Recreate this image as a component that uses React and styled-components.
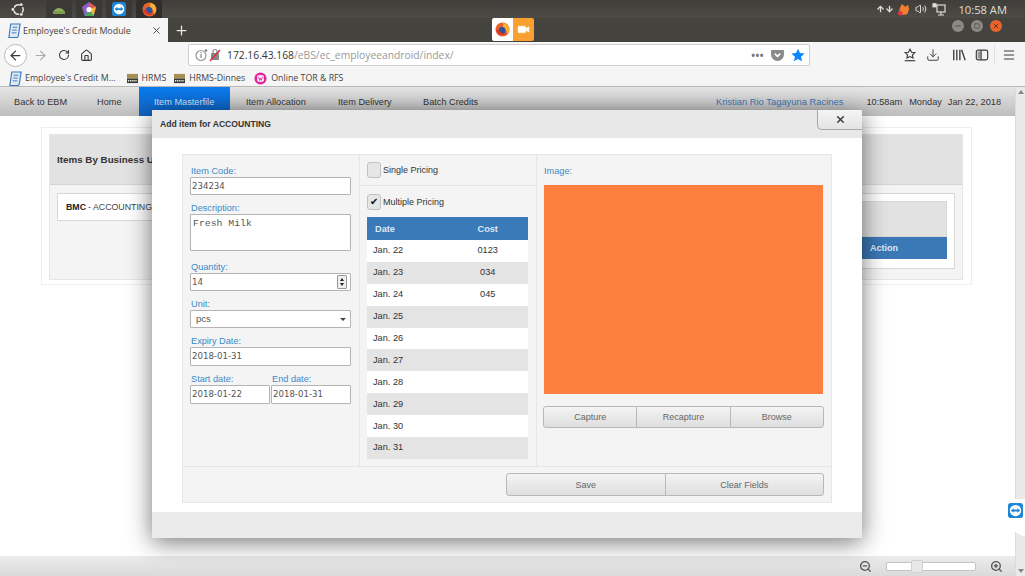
import styled, { createGlobalStyle } from "styled-components";
import {
  ArrowLeft,
  ArrowRight,
  RotateCw,
  Home as HomeIcon,
  Download,
  Menu,
  Plus,
  X,
  Video,
  Volume2,
  ArrowUp,
  ArrowDown,
  Minus,
  Square,
  ZoomIn,
  ZoomOut,
} from "lucide-react";

const GlobalStyle = createGlobalStyle`
  html, body {
    margin: 0;
    padding: 0;
    width: 1025px;
    height: 576px;
    overflow: hidden;
    background: #fff;
    font-family: "Liberation Sans", Arial, sans-serif;
  }
  * { box-sizing: border-box; }
`;

const Screen = styled.div`
  position: relative;
  width: 1025px;
  height: 576px;
  display: flex;
  flex-direction: column;
  overflow: hidden;
`;

/* ubuntu top panel */
const TopPanel = styled.div`
  height: 18px;
  flex: none;
  background: linear-gradient(#3f3e3a, #4d4b45);
  display: flex;
  align-items: center;
  padding-left: 10px;
`;

const UbuntuSlot = styled.div`
  width: 16px;
  margin-right: 20px;
  display: flex;
  align-items: center;
  justify-content: center;
`;

const Launcher = styled.div`
  width: 26px;
  height: 18px;
  margin-right: 4px;
  border-radius: 3px 3px 0 0;
  background: ${(p) => (p.$active ? "#2f2e2b" : "#3a3935")};
  display: flex;
  align-items: center;
  justify-content: center;
`;

const Tray = styled.div`
  margin-left: auto;
  display: flex;
  align-items: center;
  color: #e0dfdb;
  padding-right: 18px;
`;

const TrayIcon = styled.div`
  display: flex;
  align-items: center;
  justify-content: center;
  width: 18px;
  color: #dddcd8;
`;

const Clock = styled.span`
  margin-left: 10px;
  font-family: "Open Sans", sans-serif;
  font-size: 11.2px;
  color: #dfdedb;
`;

/* firefox chrome */
const TabBar = styled.div`
  position: relative;
  height: 24px;
  flex: none;
  background: #45433e;
  display: flex;
  align-items: stretch;
`;

const Tab = styled.div`
  width: 168px;
  background: #f5f5f5;
  display: flex;
  align-items: center;
  padding: 0 6px 0 7px;
  font-family: "Open Sans", sans-serif;
  font-size: 8.9px;
  color: #444;
`;

const TabTitle = styled.span`
  margin-left: 1px;
  flex: 1;
  white-space: nowrap;
`;

const NewTab = styled.div`
  width: 26px;
  display: flex;
  align-items: center;
  justify-content: center;
  color: #e8e8e8;
`;

const SharingPill = styled.div`
  position: absolute;
  left: 492px;
  top: 0;
  width: 42px;
  height: 23px;
  display: flex;
  border-radius: 2px;
  overflow: hidden;
`;

const SharePart = styled.div`
  flex: 1;
  display: flex;
  align-items: center;
  justify-content: center;
  color: #fff;
  background: ${(p) => p.$bg};
`;

const WindowButtons = styled.div`
  position: absolute;
  right: 20px;
  top: 0;
  height: 15px;
  display: flex;
  gap: 7px;
  align-items: center;
  padding: 0 3px;
`;

const WindowButton = styled.div`
  width: 12px;
  height: 12px;
  border-radius: 50%;
  background: ${(p) => p.$bg};
  color: ${(p) => p.$fg};
  display: flex;
  align-items: center;
  justify-content: center;
`;

const NavToolbar = styled.div`
  height: 26px;
  flex: none;
  background: #f5f5f5;
  display: flex;
  align-items: center;
  padding-left: 4px;
  color: #3a3a3a;
`;

const BackButton = styled.div`
  width: 23px;
  height: 23px;
  border-radius: 50%;
  background: #fff;
  border: 1px solid #b8b8b8;
  display: flex;
  align-items: center;
  justify-content: center;
`;

const ToolIcon = styled.div`
  width: ${(p) => p.$w || 22}px;
  display: flex;
  align-items: center;
  justify-content: center;
  color: ${(p) => p.$color || "#3a3a3a"};
`;

const UrlBox = styled.div`
  width: 622px;
  height: 22px;
  margin-left: 91px;
  background: #fff;
  border: 1px solid #cfcfcf;
  border-radius: 2px;
  display: flex;
  align-items: center;
  padding: 0 4px 0 6px;
  font-family: "Open Sans", sans-serif;
  font-size: 10.3px;
  color: #999;
`;

const UrlHost = styled.span`
  color: #333;
  margin-left: 6px;
`;

const UrlActions = styled.div`
  margin-left: auto;
  display: flex;
  align-items: center;
  gap: 7px;
`;

const Dots = styled.span`
  font-size: 10px;
  letter-spacing: 0.5px;
  color: #777;
  font-weight: 700;
`;

const RightTools = styled.div`
  margin-left: 89px;
  display: flex;
  align-items: center;
`;

const Separator = styled.div`
  width: 1px;
  height: 20px;
  background: #e0e0e0;
  margin: 0 4px 0 3px;
`;

const Bookmarks = styled.div`
  height: 19px;
  flex: none;
  background: #f5f5f5;
  border-bottom: 1px solid #b9b9b9;
  display: flex;
  align-items: center;
  padding: 2px 0 0 8px;
  font-family: "Open Sans", sans-serif;
  font-size: 8.8px;
  color: #444;
`;

const Bookmark = styled.div`
  display: flex;
  align-items: center;
  gap: ${(p) => p.$inner || 4}px;
  margin-right: ${(p) => p.$gap}px;
  white-space: nowrap;
`;

/* the page */
const PageNav = styled.div`
  height: 29px;
  flex: none;
  background: linear-gradient(#e6e6e6, #bdbdbd);
  display: flex;
  align-items: center;
  font-size: 9.2px;
  color: #333;
`;

const NavItem = styled.div`
  height: 100%;
  width: ${(p) => p.$w}px;
  padding-left: ${(p) => p.$pad}px;
  display: flex;
  align-items: center;
  white-space: nowrap;
  color: ${(p) => (p.$active ? "#d5e6fb" : "#333")};
  background: ${(p) => (p.$active ? "linear-gradient(#0a7cf0, #0f62bd)" : "none")};
`;

const UserName = styled.span`
  margin-left: auto;
  font-size: 9.4px;
  color: #3f78b8;
`;

const NavInfo = styled.span`
  margin-left: ${(p) => p.$gap}px;
  margin-right: ${(p) => p.$end || 0}px;
  color: #333;
  white-space: nowrap;
`;

const Main = styled.div`
  flex: 1;
  min-height: 0;
  display: flex;
`;

const Content = styled.div`
  flex: 1;
  display: flex;
  flex-direction: column;
  background: #fff;
`;

const PageArea = styled.div`
  flex: 1;
  padding: 11px 43px 0 41px;
`;

const Outer = styled.div`
  height: 158px;
  border: 1px solid #eeeeee;
  padding: 6px 8px 6px 7px;
`;

const UnitPanel = styled.div`
  height: 146px;
  background: #f4f4f4;
  border: 1px solid #e6e6e6;
  display: flex;
  flex-direction: column;
`;

const UnitHead = styled.div`
  height: 50px;
  flex: none;
  background: #e2e2e2;
  border-bottom: 1px solid #d4d4d4;
  display: flex;
  align-items: center;
  padding-left: 7px;
  font-size: 9.8px;
  font-weight: 700;
  color: #333;
`;

const UnitBody = styled.div`
  display: flex;
  justify-content: space-between;
  padding: 8px 7px 0;
`;

const UnitCard = styled.div`
  width: 230px;
  height: 28px;
  background: #fff;
  border: 1px solid #d8d8d8;
  display: flex;
  align-items: center;
  gap: 2px;
  padding-left: 8px;
  font-size: 8.8px;
  color: #444;
`;

const Strong = styled.b`
  color: #222;
`;

const ItemsCard = styled.div`
  width: 300px;
  height: 76px;
  background: #fff;
  border: 1px solid #d8d8d8;
  padding: 7px 7px 0;
`;

const ItemsHead = styled.div`
  height: 36px;
  background: #e2e2e2;
  border: 1px solid #d8d8d8;
`;

const ItemsColumns = styled.div`
  height: 22px;
  background: #3a78b6;
  color: #dfeaf5;
  font-size: 9px;
  font-weight: 700;
  display: flex;
  align-items: center;
  justify-content: flex-end;
  padding-right: 49px;
`;

const Scrollbar = styled.div`
  width: 10px;
  flex: none;
  background: #e9e9e9;
  border-left: 1px solid #dcdcdc;
  display: flex;
  flex-direction: column;
  align-items: center;
  justify-content: space-between;
  padding: 3px 0;
`;

const ScrollArrow = styled.div`
  width: 0;
  height: 0;
  border-left: 3px solid transparent;
  border-right: 3px solid transparent;
  border-${(p) => (p.$down ? "top" : "bottom")}: 4px solid #888;
`;

const StatusBar = styled.div`
  height: 20px;
  flex: none;
  background: linear-gradient(#ececec, #dadada);
  display: flex;
  align-items: center;
  justify-content: flex-end;
  padding-right: 12px;
  color: #555;
`;

const ZoomTrack = styled.div`
  position: relative;
  width: 90px;
  height: 9px;
  margin: 0 14px;
  background: #fff;
  border: 1px solid #c4c4c4;
  border-radius: 2px;
`;

const ZoomThumb = styled.div`
  position: absolute;
  left: 24px;
  top: -3px;
  width: 12px;
  height: 13px;
  background: #e8e8e8;
  border: 1px solid #d0d0d0;
  border-radius: 2px;
`;

const ViewerTab = styled.div`
  position: absolute;
  left: 1004px;
  top: 499px;
  width: 21px;
  height: 38px;
  background: #fff;
  border-radius: 3px 0 0 3px;
  clip-path: polygon(0 0, 100% 0, 100% 100%, 0 72%);
  padding: 4px 0 0 4px;
`;

/* the dialog */
const Modal = styled.div`
  position: absolute;
  left: 152px;
  top: 110px;
  width: 710px;
  height: 428px;
  background: #fff;
  border-radius: 2px;
  box-shadow: 0 4px 24px rgba(0, 0, 0, 0.55);
  display: flex;
  flex-direction: column;
`;

const ModalHead = styled.div`
  position: relative;
  height: 28px;
  flex: none;
  background: #e8e8e8;
  display: flex;
  align-items: center;
  padding-left: 8px;
  font-size: 8.6px;
  font-weight: 700;
  color: #333;
`;

const CloseTab = styled.div`
  position: absolute;
  right: 0;
  top: 0;
  width: 45px;
  height: 20px;
  background: linear-gradient(#f4f4f4, #e4e4e4);
  border-left: 1px solid #a8a8a8;
  border-bottom: 1px solid #a8a8a8;
  border-radius: 0 0 0 5px;
  display: flex;
  align-items: center;
  justify-content: center;
  color: #444;
`;

const ModalBody = styled.div`
  flex: 1;
  padding: 16px 30px 9px;
`;

const ModalFoot = styled.div`
  height: 26px;
  flex: none;
  background: #ebebeb;
`;

const FormPanel = styled.div`
  height: 349px;
  background: #f4f4f4;
  border: 1px solid #e8e8e8;
  display: flex;
  flex-direction: column;
`;

const Columns = styled.div`
  flex: 1;
  min-height: 0;
  display: grid;
  grid-template-columns: 177px 177px 1fr;
`;

const LeftCol = styled.div`
  padding: 10px 8px 0 7px;
  border-right: 1px solid #e6e6e6;
`;

const Field = styled.div`
  margin-top: ${(p) => p.$gap || 0}px;
`;

const Label = styled.label`
  display: block;
  height: 12px;
  line-height: 12px;
  padding-left: 1px;
  font-size: 9.2px;
  color: #3a8ac9;
  white-space: nowrap;
`;

const TextBox = styled.div`
  position: relative;
  display: block;
  width: 100%;
  height: ${(p) => p.$h || 18}px;
  line-height: ${(p) => (p.$h || 18) - 2}px;
  padding-left: 1px;
  border: 1px solid #b4b4b4;
  border-radius: 1px;
  background: #fff;
  color: #555;
  font-family: "DejaVu Sans", sans-serif;
  font-size: 8.6px;
`;

const TextArea = styled(TextBox)`
  line-height: 12px;
  padding: 3px 0 0 2px;
  font-family: "Liberation Mono", monospace;
  font-size: 9.8px;
`;

const SelectBox = styled(TextBox)`
  padding: 0 4px 0 5px;
  font-family: "Liberation Sans", sans-serif;
  font-size: 9.5px;
  display: flex;
  align-items: center;
  justify-content: space-between;
`;

const Caret = styled.span`
  width: 0;
  height: 0;
  border-left: 3px solid transparent;
  border-right: 3px solid transparent;
  border-top: 3px solid #444;
`;

const Spinner = styled.div`
  position: absolute;
  right: 3px;
  top: 1px;
  width: 10px;
  height: 14px;
  border: 1px solid #999;
  border-radius: 1px;
  background: #eee;
  display: flex;
  flex-direction: column;
  align-items: center;
  justify-content: space-around;
  padding: 1px 0;
`;

const SpinArrow = styled.span`
  width: 0;
  height: 0;
  border-left: 2px solid transparent;
  border-right: 2px solid transparent;
  border-${(p) => (p.$down ? "top" : "bottom")}: 3px solid #222;
`;

const DateRow = styled.div`
  display: grid;
  grid-template-columns: 80px 80px;
  gap: 1px;
`;

const MiddleCol = styled.div`
  border-right: 1px solid #e6e6e6;
  display: flex;
  flex-direction: column;
`;

const PriceOption = styled.div`
  display: flex;
  align-items: center;
  gap: 2px;
  padding: 0 7px;
  height: ${(p) => p.$h}px;
  flex: none;
  font-size: 9px;
  color: #333;
  border-bottom: ${(p) => (p.$line ? "1px solid #e4e4e4" : "none")};
`;

const Check = styled.div`
  width: 14px;
  height: 16px;
  border: 1px solid #c2c2c2;
  border-radius: 3px;
  background: #e6e6e6;
  display: flex;
  align-items: center;
  justify-content: center;
  font-size: 10px;
  line-height: 1;
  color: #111;
`;

const PriceTable = styled.table`
  width: 161px;
  margin-left: 7px;
  border-collapse: collapse;
  table-layout: fixed;
  font-size: 9.2px;
  color: #333;
`;

const HeadCell = styled.th`
  height: 23px;
  background: #3a7ab8;
  color: #dbe8f4;
  font-size: 9.2px;
  text-align: left;
  padding: 0 0 0 ${(p) => p.$pad}px;
`;

const PriceRow = styled.tr`
  background: #fff;
  &:nth-child(even) {
    background: #e4e4e4;
  }
`;

const Cell = styled.td`
  height: 21.9px;
  padding: 0 0 1px ${(p) => p.$pad}px;
`;

const RightCol = styled.div`
  padding: 10px 7px 0 6px;
`;

const ImageLabel = styled(Label)`
  padding-left: 1px;
`;

const ImageBox = styled.div`
  width: 279px;
  height: 209px;
  margin: 8px 0 12px 1px;
  background: #fe8040;
`;

const ButtonGroup = styled.div`
  display: flex;
  width: ${(p) => p.$w}px;
  height: ${(p) => p.$h}px;
  border: 1px solid #b8b8b8;
  border-radius: 3px;
  overflow: hidden;
  background: linear-gradient(#f4f4f4, #dedede);
`;

const GroupButton = styled.div`
  flex: 1;
  display: flex;
  align-items: center;
  justify-content: center;
  font-size: 9px;
  color: #666;
  border-left: 1px solid #b8b8b8;
  &:first-child {
    border-left: none;
  }
`;

const FootRow = styled.div`
  height: 36px;
  flex: none;
  border-top: 1px solid #e6e6e6;
  display: flex;
  justify-content: flex-end;
  align-items: center;
  padding-right: 7px;
`;

const Name = styled.span`
  white-space: nowrap;
`;

const FireFox = ({ size = 15 }) => (
  <svg width={size} height={size} viewBox="0 0 16 16">
    <circle cx="8" cy="8" r="7.5" fill="#e8622a" />
    <path d="M8 1a7 7 0 0 1 7 7c0 2-1 4-2 5 0-3-1-6-5-7 1-2 1-4 0-5z" fill="#f9b233" />
    <circle cx="7.5" cy="9" r="3.6" fill="#2d4f9e" />
    <path d="M1 8c1 4 4 6 7 6 2 0 4-1 5-2-3 1-7 0-8-3-1 0-3-1-4-1z" fill="#d8352a" />
  </svg>
);

const UbuntuLogo = () => (
  <svg width="15" height="15" viewBox="0 0 16 16">
    <circle cx="8" cy="8" r="5" fill="none" stroke="#e6e6e6" strokeWidth="1.6" strokeDasharray="7 3.47" strokeDashoffset="-6.98" />
    <circle cx="2" cy="8" r="1.5" fill="#e6e6e6" />
    <circle cx="11" cy="2.8" r="1.5" fill="#e6e6e6" />
    <circle cx="11" cy="13.2" r="1.5" fill="#e6e6e6" />
  </svg>
);

const AndroidLogo = () => (
  <svg width="14" height="10" viewBox="0 0 14 10">
    <path d="M1 10a6 6 0 0 1 12 0z" fill="#8fae5e" />
    <rect x="1" y="7" width="12" height="3" fill="#7c9c50" />
  </svg>
);

const PolyLogo = () => (
  <svg width="14" height="14" viewBox="0 0 14 14">
    <polygon points="7,0 14,5 11.5,14 2.5,14 0,5" fill="#8a5fc9" />
    <polygon points="7,0 14,5 7,7" fill="#e4574b" />
    <polygon points="14,5 11.5,14 7,7" fill="#f2b632" />
    <polygon points="2.5,14 11.5,14 7,7" fill="#49a85c" />
    <circle cx="7" cy="7.5" r="2.6" fill="#fff" />
  </svg>
);

const ViewerLogo = ({ size = 14 }) => (
  <svg width={size} height={size} viewBox="0 0 16 16">
    <rect width="16" height="16" rx="3" fill="#1d87d6" />
    <circle cx="8" cy="8" r="6" fill="#fff" />
    <path d="M3 8l3-2.5v1.5h4V5.500L13 8l-3 2.500V9H6v1.500z" fill="#1d87d6" />
  </svg>
);

const ModuleIcon = () => (
  <svg width="15" height="15" viewBox="0 0 16 16">
    <path d="M4 1h10l-2 13a2 2 0 0 1-2 1.500H2L4 1z" fill="#dfeaf6" stroke="#3b78b5" strokeWidth="1.200" />
    <path d="M6 4.500h5M5.500 7.500h5M5 10.500h5" stroke="#3b78b5" strokeWidth="1" />
  </svg>
);

const HrmsIcon = () => (
  <svg width="11" height="11" viewBox="0 0 12 12">
    <rect y="1" width="12" height="5" fill="#a58f55" />
    <rect y="6" width="12" height="5" fill="#3a3a34" />
    <path d="M1 8.500h10" stroke="#e8e8e0" strokeWidth="1.600" strokeDasharray="1.500 .8" />
  </svg>
);

const TorIcon = () => (
  <svg width="13" height="13" viewBox="0 0 14 14">
    <circle cx="7" cy="7" r="6.500" fill="#e0259e" />
    <rect x="3.500" y="3.500" width="7" height="7" rx="1.500" fill="#fff" />
    <path d="M5 5l1 4 1-2.500L8 9l1-4" fill="none" stroke="#e0259e" strokeWidth="1" />
  </svg>
);

const InsecureIcon = () => (
  <svg width="26" height="14" viewBox="0 0 26 14">
    <circle cx="6" cy="7.500" r="5" fill="none" stroke="#999" strokeWidth="1.200" />
    <path d="M6 6v4" stroke="#999" strokeWidth="1.400" />
    <circle cx="6" cy="4.500" r=".8" fill="#999" />
    <circle cx="11" cy="2.500" r="1.200" fill="#777" />
    <rect x="16" y="5" width="8" height="7" rx="1" fill="#888" />
    <path d="M18 5V3.500a2 2 0 0 1 4 0V5" fill="none" stroke="#888" strokeWidth="1.200" />
    <path d="M15 13L25 2" stroke="#d92d3c" strokeWidth="1.500" />
  </svg>
);

const PocketIcon = () => (
  <svg width="13" height="12" viewBox="0 0 14 13">
    <path d="M1 1h12a1 1 0 0 1 1 1v4a7 7 0 0 1-14 0V2a1 1 0 0 1 1-1z" fill="#8a8a8a" />
    <path d="M4 5l3 3 3-3" fill="none" stroke="#fff" strokeWidth="1.600" />
  </svg>
);

const StarIcon = () => (
  <svg width="14" height="14" viewBox="0 0 16 16">
    <path d="M8 .8l2.200 4.900 5.300.6-4 3.600 1.100 5.300L8 12.500 3.400 15.200l1.100-5.300-4-3.600 5.300-.6z" fill="#0a84ff" />
  </svg>
);

const SaveIcon = () => (
  <svg width="14" height="14" viewBox="0 0 16 16" fill="none" stroke="#3a3a3a" strokeWidth="1.300">
    <path d="M8 1.500l1.800 3.400 3.700.5-2.700 2.500.7 3.600L8 9.800l-3.500 1.700.7-3.600-2.700-2.500 3.700-.5z" />
    <path d="M2 14.500h12" />
  </svg>
);

const LibraryIcon = () => (
  <svg width="14" height="14" viewBox="0 0 16 16" fill="none" stroke="#3a3a3a" strokeWidth="1.500">
    <path d="M2 2v12M5.500 2v12M9 2v12M11 2l4 12" />
  </svg>
);

const SidebarIcon = () => (
  <svg width="14" height="14" viewBox="0 0 16 16" fill="none" stroke="#3a3a3a" strokeWidth="1.300">
    <rect x="1.500" y="2.500" width="13" height="11" rx="2" />
    <rect x="3" y="4" width="3.500" height="8" fill="#3a3a3a" stroke="none" opacity=".5" />
    <path d="M7 2.500v11" />
  </svg>
);

const AvastIcon = () => (
  <svg width="13" height="13" viewBox="0 0 14 14">
    <path d="M5 1l4 3 3-2 1 5-2 5-5 1-4-3 1-4z" fill="#f08030" />
    <circle cx="3.500" cy="11" r="2.500" fill="#e0344a" />
  </svg>
);

const NetworkIcon = () => (
  <svg width="14" height="13" viewBox="0 0 14 13" fill="none" stroke="#dddcd8" strokeWidth="1.200">
    <rect x="5" y="2" width="8" height="7" />
    <rect x="1" y="0.800" width="3" height="3" fill="#dddcd8" />
    <path d="M9 9v2.500M6 12h6" />
  </svg>
);

const PRICES = [
  ["Jan. 22", "0123"],
  ["Jan. 23", "\u00a0034"],
  ["Jan. 24", "\u00a0045"],
  ["Jan. 25", ""],
  ["Jan. 26", ""],
  ["Jan. 27", ""],
  ["Jan. 28", ""],
  ["Jan. 29", ""],
  ["Jan. 30", ""],
  ["Jan. 31", ""],
];

const NAV = [
  { label: "Back to EBM", w: 83, pad: 14 },
  { label: "Home", w: 56, pad: 14 },
  { label: "Item Masterfile", w: 91, pad: 15, active: true },
  { label: "Item Allocation", w: 92, pad: 16 },
  { label: "Item Delivery", w: 85, pad: 16 },
  { label: "Batch Credits", w: 90, pad: 16 },
];

export default function App() {
  return (
    <Screen>
      <GlobalStyle />
      <TopPanel>
        <UbuntuSlot><UbuntuLogo /></UbuntuSlot>
        <Launcher><AndroidLogo /></Launcher>
        <Launcher><PolyLogo /></Launcher>
        <Launcher><ViewerLogo /></Launcher>
        <Launcher $active><FireFox /></Launcher>
        <Tray>
          <TrayIcon>
            <ArrowUp size={10} strokeWidth={3.500} />
            <ArrowDown size={10} strokeWidth={3.500} />
          </TrayIcon>
          <TrayIcon><AvastIcon /></TrayIcon>
          <TrayIcon><Volume2 size={12} /></TrayIcon>
          <TrayIcon><NetworkIcon /></TrayIcon>
          <Clock>10:58 AM</Clock>
        </Tray>
      </TopPanel>

      <TabBar>
        <Tab>
          <ModuleIcon />
          <TabTitle>Employee's Credit Module</TabTitle>
          <X size={11} strokeWidth={2} />
        </Tab>
        <NewTab><Plus size={15} strokeWidth={2} /></NewTab>
        <SharingPill>
          <SharePart $bg="#fff"><FireFox /></SharePart>
          <SharePart $bg="#f8a030"><Video size={13} fill="#fff" strokeWidth={1} /></SharePart>
        </SharingPill>
        <WindowButtons>
          <WindowButton $bg="#8a8984" $fg="#55544f"><Minus size={8} strokeWidth={3} /></WindowButton>
          <WindowButton $bg="#8a8984" $fg="#55544f"><Square size={6} strokeWidth={3} /></WindowButton>
          <WindowButton $bg="#e8652e" $fg="#7a2e10"><X size={8} strokeWidth={3} /></WindowButton>
        </WindowButtons>
      </TabBar>

      <NavToolbar>
        <BackButton><ArrowLeft size={15} strokeWidth={2} /></BackButton>
        <ToolIcon $w={26} $color="#aaa"><ArrowRight size={15} strokeWidth={1.800} /></ToolIcon>
        <ToolIcon $w={22}><RotateCw size={12} strokeWidth={2.200} /></ToolIcon>
        <ToolIcon $w={22}><HomeIcon size={13} strokeWidth={2} /></ToolIcon>
        <UrlBox>
          <InsecureIcon />
          <UrlHost>172.16.43.168</UrlHost>
          <span>/eBS/ec_employeeandroid/index/</span>
          <UrlActions>
            <Dots>•••</Dots>
            <PocketIcon />
            <StarIcon />
          </UrlActions>
        </UrlBox>
        <RightTools>
          <ToolIcon $w={22}><SaveIcon /></ToolIcon>
          <ToolIcon $w={24}><Download size={14} strokeWidth={1.600} /></ToolIcon>
          <ToolIcon $w={28}><LibraryIcon /></ToolIcon>
          <ToolIcon $w={18}><SidebarIcon /></ToolIcon>
          <Separator />
          <ToolIcon $w={20}><Menu size={14} strokeWidth={1.800} /></ToolIcon>
        </RightTools>
      </NavToolbar>

      <Bookmarks>
        <Bookmark $gap={11} $inner={2}><ModuleIcon /><Name>Employee's Credit M...</Name></Bookmark>
        <Bookmark $gap={8}><HrmsIcon /><Name>HRMS</Name></Bookmark>
        <Bookmark $gap={9}><HrmsIcon /><Name>HRMS-Dinnes</Name></Bookmark>
        <Bookmark $gap={0}><TorIcon /><Name>Online TOR &amp; RFS</Name></Bookmark>
      </Bookmarks>

      <Main>
        <Content>
          <PageNav>
            {NAV.map((n) => (
              <NavItem key={n.label} $w={n.w} $pad={n.pad} $active={n.active}>
                {n.label}
              </NavItem>
            ))}
            <UserName>Kristian Rio Tagayuna Racines</UserName>
            <NavInfo $gap={23}>10:58am</NavInfo>
            <NavInfo $gap={7}>Monday</NavInfo>
            <NavInfo $gap={6} $end={14}>Jan 22, 2018</NavInfo>
          </PageNav>
          <PageArea>
            <Outer>
              <UnitPanel>
                <UnitHead>Items By Business Unit</UnitHead>
                <UnitBody>
                  <UnitCard><Strong>BMC</Strong> - ACCOUNTING</UnitCard>
                  <ItemsCard>
                    <ItemsHead />
                    <ItemsColumns>Action</ItemsColumns>
                  </ItemsCard>
                </UnitBody>
              </UnitPanel>
            </Outer>
          </PageArea>
          <StatusBar>
            <ZoomOut size={13} strokeWidth={2.400} />
            <ZoomTrack><ZoomThumb /></ZoomTrack>
            <ZoomIn size={13} strokeWidth={2.400} />
          </StatusBar>
        </Content>
        <Scrollbar>
          <ScrollArrow />
          <ScrollArrow $down />
        </Scrollbar>
      </Main>

      <ViewerTab><ViewerLogo size={15} /></ViewerTab>

      <Modal>
        <ModalHead>
          Add item for ACCOUNTING
          <CloseTab><X size={11} strokeWidth={3.500} /></CloseTab>
        </ModalHead>
        <ModalBody>
          <FormPanel>
            <Columns>
              <LeftCol>
                <Field>
                  <Label>Item Code:</Label>
                  <TextBox>234234</TextBox>
                </Field>
                <Field $gap={7}>
                  <Label>Description:</Label>
                  <TextArea $h={37}>Fresh Milk</TextArea>
                </Field>
                <Field $gap={10}>
                  <Label>Quantity:</Label>
                  <TextBox>
                    14
                    <Spinner><SpinArrow /><SpinArrow $down /></Spinner>
                  </TextBox>
                </Field>
                <Field $gap={7}>
                  <Label>Unit:</Label>
                  <SelectBox>pcs<Caret /></SelectBox>
                </Field>
                <Field $gap={7}>
                  <Label>Expiry Date:</Label>
                  <TextBox $h={19}>2018-01-31</TextBox>
                </Field>
                <Field $gap={7}>
                  <DateRow>
                    <div>
                      <Label>Start date:</Label>
                      <TextBox $h={19}>2018-01-22</TextBox>
                    </div>
                    <div>
                      <Label>End date:</Label>
                      <TextBox $h={19}>2018-01-31</TextBox>
                    </div>
                  </DateRow>
                </Field>
              </LeftCol>
              <MiddleCol>
                <PriceOption $h={31} $line>
                  <Check />
                  Single Pricing
                </PriceOption>
                <PriceOption $h={31}>
                  <Check>✔</Check>
                  Multiple Pricing
                </PriceOption>
                <PriceTable>
                  <thead>
                    <tr>
                      <HeadCell $pad={8}>Date</HeadCell>
                      <HeadCell $pad={30}>Cost</HeadCell>
                    </tr>
                  </thead>
                  <tbody>
                    {PRICES.map(([date, cost]) => (
                      <PriceRow key={date}>
                        <Cell $pad={6}>{date}</Cell>
                        <Cell $pad={30}>{cost}</Cell>
                      </PriceRow>
                    ))}
                  </tbody>
                </PriceTable>
              </MiddleCol>
              <RightCol>
                <ImageLabel>Image:</ImageLabel>
                <ImageBox />
                <ButtonGroup $w={281} $h={22}>
                  <GroupButton>Capture</GroupButton>
                  <GroupButton>Recapture</GroupButton>
                  <GroupButton>Browse</GroupButton>
                </ButtonGroup>
              </RightCol>
            </Columns>
            <FootRow>
              <ButtonGroup $w={318} $h={23}>
                <GroupButton>Save</GroupButton>
                <GroupButton>Clear Fields</GroupButton>
              </ButtonGroup>
            </FootRow>
          </FormPanel>
        </ModalBody>
        <ModalFoot />
      </Modal>
    </Screen>
  );
}
